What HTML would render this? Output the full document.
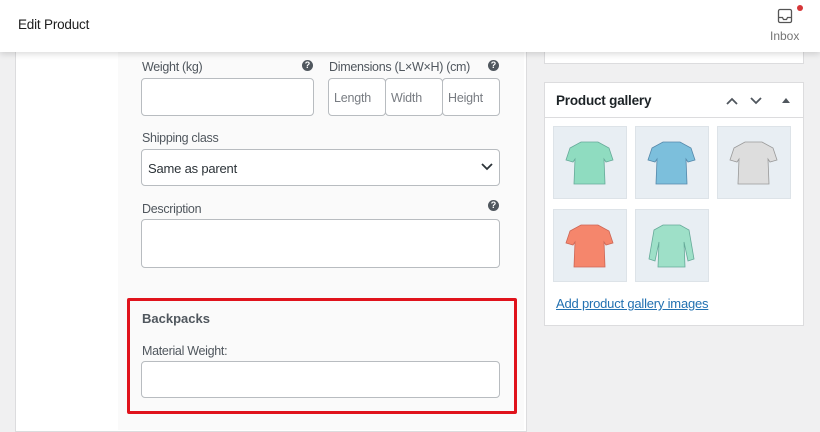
<!DOCTYPE html><html><head><style>
body{margin:0;width:820px;height:421px;background:#f0f0f1;font-family:"Liberation Sans",sans-serif;position:relative;overflow:hidden;color:#3c434a}
.a{position:absolute}
.hdr{left:0;top:0;width:820px;height:52px;background:#fff;box-shadow:0 2px 6px rgba(0,0,0,.15);z-index:5}
.inp{position:absolute;background:#fff;border:1px solid #b8bcc0;border-radius:4px;box-sizing:border-box}
.lbl{position:absolute;font-size:12.5px;letter-spacing:-0.3px;color:#50575e}
.q{position:absolute;width:11px;height:11px;border-radius:50%;background:#50575e;color:#fff;font-size:9px;font-weight:bold;text-align:center;line-height:11px}
.ph{position:absolute;font-size:12.5px;letter-spacing:-0.2px;color:#787c82}
.th{position:absolute;width:74px;height:73px;background:#e8eef3;border:1px solid #dde3e8;box-sizing:border-box}
</style></head><body>
<div class="a hdr"><div class="a" style="left:18px;top:17px;font-size:13.5px;letter-spacing:-0.2px;color:#1e1e1e">Edit Product</div>
<svg class="a" style="left:777px;top:8px" width="16" height="16" viewBox="0 0 16 16" fill="none" stroke="#555" stroke-width="1.3"><rect x="1.5" y="1.5" width="13" height="13" rx="1.5"/><path d="M1.5 9.5h4l1 2h3l1-2h4"/></svg>
<div class="a" style="left:797px;top:5px;width:6px;height:6px;border-radius:50%;background:#d63638"></div>
<div class="a" style="left:770px;top:29px;font-size:12px;color:#757575">Inbox</div></div>
<div class="a" style="left:15px;top:40px;width:510px;height:390px;background:#fff;border:1px solid #dcdcde"></div>
<div class="a" style="left:118px;top:40px;width:406px;height:390px;background:#fafafa"></div>
<div class="lbl" style="left:142px;top:60px">Weight (kg)</div><div class="q" style="left:302px;top:60px">?</div>
<div class="lbl" style="left:329px;top:60px">Dimensions (L×W×H) (cm)</div><div class="q" style="left:488px;top:60px">?</div>
<div class="inp" style="left:141px;top:78px;width:173px;height:38px"></div>
<div class="inp" style="left:328px;top:78px;width:58px;height:38px"></div><div class="ph" style="left:334px;top:91px">Length</div>
<div class="inp" style="left:385px;top:78px;width:58px;height:38px"></div><div class="ph" style="left:391px;top:91px">Width</div>
<div class="inp" style="left:442px;top:78px;width:58px;height:38px"></div><div class="ph" style="left:448px;top:91px">Height</div>
<div class="lbl" style="left:142px;top:131px">Shipping class</div>
<div class="inp" style="left:141px;top:149px;width:359px;height:37px"></div>
<div class="a" style="left:148px;top:161px;font-size:13px;letter-spacing:-0.2px;color:#2c3338">Same as parent</div>
<svg class="a" style="left:481px;top:163px" width="12" height="8" viewBox="0 0 12 8"><path d="M1 1l5 5 5-5" fill="none" stroke="#2c3338" stroke-width="1.8"/></svg>
<div class="lbl" style="left:142px;top:202px">Description</div><div class="q" style="left:488px;top:200px">?</div>
<div class="inp" style="left:141px;top:219px;width:359px;height:49px"></div>
<div class="a" style="left:127px;top:298px;width:390px;height:116px;border:3px solid #e0131c;border-radius:2px;box-sizing:border-box"></div>
<div class="a" style="left:142px;top:311px;font-size:13px;font-weight:bold;color:#50575e">Backpacks</div>
<div class="lbl" style="left:142px;top:344px">Material Weight:</div>
<div class="inp" style="left:141px;top:361px;width:359px;height:37px"></div>
<div class="a" style="left:544px;top:30px;width:258px;height:32px;background:#fff;border:1px solid #dcdcde"></div>
<div class="a" style="left:544px;top:82px;width:258px;height:242px;background:#fff;border:1px solid #dcdcde"></div>
<div class="a" style="left:545px;top:117px;width:258px;height:1px;background:#dcdcde"></div>
<div class="a" style="left:556px;top:93px;font-size:13.5px;font-weight:bold;letter-spacing:-0.2px;color:#1d2327">Product gallery</div>
<svg class="a" style="left:726px;top:96px" width="70" height="10" viewBox="0 0 70 10"><path d="M1 8l5-5 5 5M25 2l5 5 5-5" fill="none" stroke="#50575e" stroke-width="1.8"/><path d="M56 7l4-5 4 5z" fill="#50575e"/></svg>
<div class="th" style="left:553px;top:126px"></div><div class="th" style="left:635px;top:126px"></div><div class="th" style="left:717px;top:126px"></div>
<div class="th" style="left:553px;top:209px"></div><div class="th" style="left:635px;top:209px"></div>
<svg class="a" style="left:553px;top:126px" width="240" height="160">
<path d="M17 22l11-6h17l11 6 4 12-7 2-2-3 1 25h-31l1-25-2 3-7-2z" fill="#8fdcc0" stroke="#6a9" stroke-width=".8"/>
<path d="M99 22l11-6h17l11 6 4 12-7 2-2-3 1 25h-31l1-25-2 3-7-2z" fill="#7cbfdc" stroke="#58a" stroke-width=".8"/>
<path d="M181 22l11-6h17l11 6 4 12-7 2-2-3 1 25h-31l1-25-2 3-7-2z" fill="#ddd" stroke="#999" stroke-width=".8"/>
<path d="M17 105l11-6h17l11 6 4 12-7 2-2-3 1 25h-31l1-25-2 3-7-2z" fill="#f5866c" stroke="#c65" stroke-width=".8"/>
<path d="M101 104l9-5h17l9 5 5 29-6 2-4-19 1 25h-27l1-25-4 19-6-2z" fill="#9ee0c8" stroke="#6a9" stroke-width=".8"/>
</svg>
<div class="a" style="left:556px;top:296px;font-size:13px;letter-spacing:-0.2px;color:#2271b1;text-decoration:underline">Add product gallery images</div>
</body></html>
